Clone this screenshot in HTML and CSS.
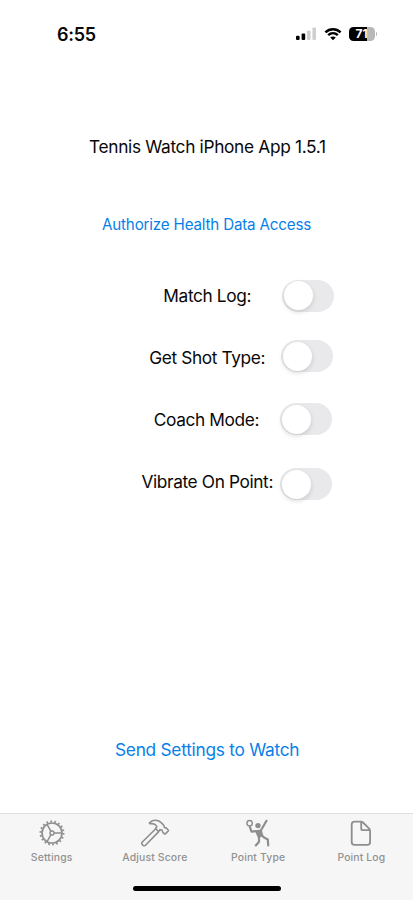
FILE: index.html
```html
<!DOCTYPE html>
<html lang="en">
<head>
<meta charset="utf-8">
<title>Tennis Watch</title>
<link rel="stylesheet" href="styles.css">
</head>
<body>
<div class="app">
  <header class="status">
    <span class="time">6:55</span>
    <div class="indicators">
      <svg class="signal" width="21" height="14" viewBox="0 0 21 14"><rect x="0" y="8.7" width="3.6" height="4.3" rx="1.1"/><rect x="5.6" y="6.5" width="3.6" height="6.5" rx="1.1"/><rect class="dim" x="11" y="3.4" width="3.6" height="9.6" rx="1.1"/><rect class="dim" x="16.4" y="0.5" width="3.6" height="12.5" rx="1.1"/></svg>
      <svg class="wifi" width="18" height="14" viewBox="0 0 18 14"><path d="M1.4 5.3C5.8 1.1 12.2 1.1 16.6 5.3M4.2 8.2c2.8-2.6 6.8-2.6 9.6 0"/><path class="dot" d="M9 13.3 6.2 10.5c1.6-1.4 4-1.4 5.6 0z"/></svg>
      <div class="battery"><span>71</span></div><i class="cap"></i>
    </div>
  </header>
  <main>
    <h1>Tennis Watch iPhone App 1.5.1</h1>
    <a class="authorize">Authorize Health Data Access</a>
    <section class="options">
      <div class="row match"><label>Match Log:</label><span class="toggle"></span></div>
      <div class="row shot"><label>Get Shot Type:</label><span class="toggle"></span></div>
      <div class="row coach"><label>Coach Mode:</label><span class="toggle"></span></div>
      <div class="row vibrate"><label>Vibrate On Point:</label><span class="toggle"></span></div>
    </section>
    <a class="send">Send Settings to Watch</a>
  </main>
  <footer>
    <nav>
      <div class="tab">
        <svg width="30" height="30" viewBox="0 0 30 30"><circle cx="15" cy="15" r="10" stroke-width="1.7"/><circle cx="15" cy="15" r="11.6" stroke-width="1.8" stroke-dasharray="1.7 2.349"/><circle cx="15" cy="15" r="2" stroke-width="1.4"/><path stroke-width="1.5" d="M17 15h8M14 13.3 10 6.4M14 16.7l-4 6.9"/></svg>
        <span>Settings</span>
      </div>
      <div class="tab">
        <svg width="30" height="30" viewBox="0 0 30 30"><path stroke-width="1.6" stroke-linejoin="round" d="M15.8 10.8 2.3 24c-1.7 1.8 1.4 5 3.2 3.2L18.7 13.6M9.8 4.5C13 1.4 18.3 1.6 21.5 4.9l2.2 2.3c.6.7.4 1.7.8 2.3.6.7 1.5.1 2.1.7l1.4 1.5c.5.5.5 1 0 1.5l-2.4 2.4c-.5.5-1 .5-1.5 0l-1.4-1.5c-.6-.7 0-1.5-.7-2-.7-.4-1.4.1-2.1-.5l-1.2 2-3.3-3.1 1.4-1.4c-.3-2.6-3.4-3.7-6.5-3.4-1 .1-1.1-.6-.5-1.2z"/></svg>
        <span>Adjust Score</span>
      </div>
      <div class="tab">
        <svg width="30" height="30" viewBox="0 0 30 30"><circle cx="6.6" cy="5.2" r="2.7" stroke-width="1.4"/><circle class="solid" cx="15" cy="7.6" r="2.7"/><path class="solid" d="M11.6 12.2 18.8 11.5 20.4 18.2 15 20z"/><path stroke-width="2.2" stroke-linecap="round" stroke-linejoin="round" d="M23.5 2.8 18 12.2M13 13.2 8.5 13.6 6.9 9M16 18.7v5.1l-3.2 3.6M19 17.7l2.5 2.1 3.3 1.6.4 6"/></svg>
        <span>Point Type</span>
      </div>
      <div class="tab">
        <svg width="30" height="30" viewBox="0 0 30 30"><path stroke-width="1.8" stroke-linejoin="round" d="M8.6 3.6h6.2c1 0 1.5.2 2.2.9l6.2 6.2c.7.7.9 1.2.9 2.2V24c0 2-.9 2.9-2.9 2.9H8.6c-2 0-2.9-.9-2.9-2.9V6.5c0-2 .9-2.9 2.9-2.9zM15.2 4v6.4c0 1.2.6 1.8 1.8 1.8h6.7"/></svg>
        <span>Point Log</span>
      </div>
    </nav>
    <div class="home"></div>
  </footer>
</div>
</body>
</html>
```
FILE: styles.css
```css
* { box-sizing: border-box; }
body { margin: 0; background: #fff; color: #080808; font-family: Inter, "Liberation Sans", sans-serif; }
.app { width: 413px; height: 900px; display: flex; flex-direction: column; }
.status { height: 68px; padding: 0 36px 0 57px; display: flex; align-items: center; justify-content: space-between; }
.time { font-size: 18px; font-weight: 600; letter-spacing: -0.3px; }
.indicators { display: flex; align-items: center; }
.signal { fill: #000; margin-right: 7px; }
.signal .dim { fill: #cfcfcf; }
.wifi { fill: none; stroke: #000; stroke-width: 2.5; margin-right: 7px; }
.wifi .dot { fill: #000; stroke: none; }
.battery { width: 26px; height: 14px; border-radius: 4.5px; background: linear-gradient(90deg, #000 71%, #b8b8b8 71%); color: #fff; font-size: 12px; font-weight: 700; line-height: 14px; text-align: center; }
.cap { width: 1.5px; height: 4px; margin-left: 1px; border-radius: 0 2px 2px 0; background: #b8b8b8; }
main { flex: 1; display: flex; flex-direction: column; align-items: flex-start; white-space: nowrap; }
h1 { margin: 68px 0 0 89px; font-size: 17.3px; line-height: 22px; font-weight: 400; letter-spacing: -0.32px; }
a { color: #087fe8; }
.authorize { margin: 57px 0 0 102px; font-size: 15.2px; line-height: 20px; letter-spacing: -0.19px; }
.options { margin-top: 30px; width: 334px; }
.row { height: 62px; display: flex; align-items: center; justify-content: flex-end; }
label { font-size: 17.3px; line-height: 22px; letter-spacing: -0.38px; }
.toggle { width: 52px; height: 32px; border-radius: 16px; background: #e9e9eb; padding: 1.5px; position: relative; }
.toggle::before { content: ""; display: block; width: 29px; height: 29px; border-radius: 50%; background: #fff; box-shadow: 0 2px 5px rgba(0,0,0,.14); }
.match .toggle { margin-left: 31px; top: -0.5px; }
.shot { padding-right: 1px; }
.shot .toggle { margin-left: 16px; top: -2px; }
.coach { padding-right: 2px; }
.coach .toggle { margin-left: 21px; top: -1px; }
.vibrate { padding-right: 2px; }
.vibrate .toggle { margin-left: 7px; top: 2px; }
.send { margin: 226px 0 0 115px; font-size: 17.3px; line-height: 22px; letter-spacing: -0.26px; }
footer { height: 87px; background: #f6f6f6; border-top: 1px solid #dedede; display: flex; flex-direction: column; align-items: center; }
nav { width: 100%; display: grid; grid-template-columns: repeat(4, 1fr); height: 72px; padding-top: 4px; }
.tab { display: flex; flex-direction: column; align-items: center; color: #929292; font-size: 10.4px; font-weight: 500; line-height: 14px; letter-spacing: 0.15px; white-space: nowrap; }
.tab svg { fill: none; stroke: #8e8e8e; margin-bottom: 3px; }
.tab .solid { fill: #8e8e8e; stroke: none; }
.home { width: 148px; height: 5px; border-radius: 3px; background: #000; }
```
